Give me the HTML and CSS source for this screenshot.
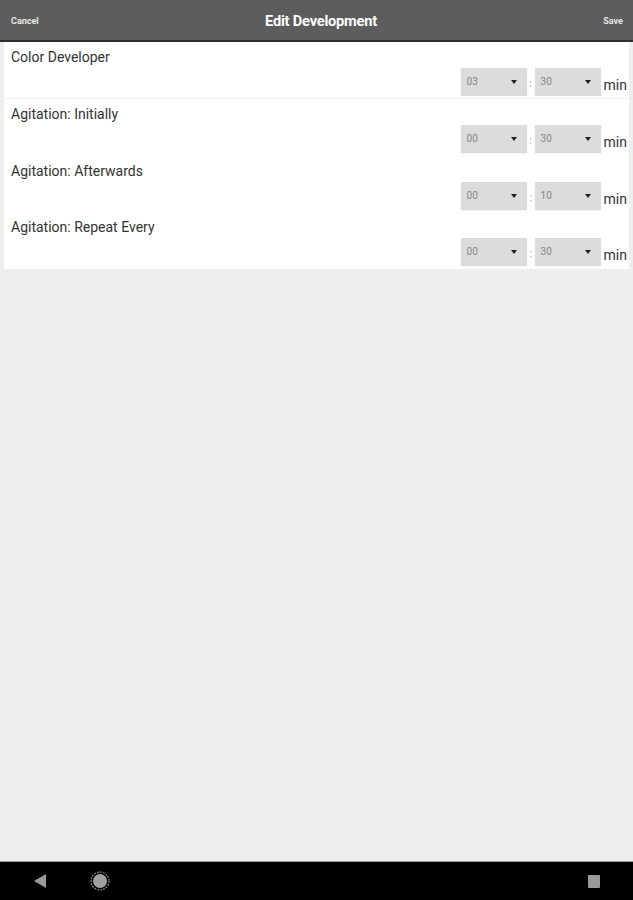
FILE: index.html
```html
<!DOCTYPE html>
<html lang="en">
<head>
  <meta charset="UTF-8">
  <meta name="viewport" content="width=device-width, initial-scale=1.0">
  <title>Edit Development</title>

  <link rel="stylesheet" href="styles.css">
</head>
<body>
  <header class="toolbar">
    <span class="toolbar__action">Cancel</span>
    <h1 class="toolbar__title">Edit Development</h1>
    <span class="toolbar__action">Save</span>
  </header>

  <main class="screen">
    <section class="step-list">
      <div class="step step--first">
        <div class="step__label">Color Developer</div>
        <div class="step__time">
          <span class="picker">03<i class="picker__arrow"></i></span>
          <span class="step__colon">:</span>
          <span class="picker">30<i class="picker__arrow"></i></span>
          <span class="step__unit">min</span>
        </div>
      </div>

      <div class="step">
        <div class="step__label">Agitation: Initially</div>
        <div class="step__time">
          <span class="picker">00<i class="picker__arrow"></i></span>
          <span class="step__colon">:</span>
          <span class="picker">30<i class="picker__arrow"></i></span>
          <span class="step__unit">min</span>
        </div>
      </div>

      <div class="step step--short">
        <div class="step__label">Agitation: Afterwards</div>
        <div class="step__time">
          <span class="picker">00<i class="picker__arrow"></i></span>
          <span class="step__colon">:</span>
          <span class="picker">10<i class="picker__arrow"></i></span>
          <span class="step__unit">min</span>
        </div>
      </div>

      <div class="step">
        <div class="step__label">Agitation: Repeat Every</div>
        <div class="step__time">
          <span class="picker">00<i class="picker__arrow"></i></span>
          <span class="step__colon">:</span>
          <span class="picker">30<i class="picker__arrow"></i></span>
          <span class="step__unit">min</span>
        </div>
      </div>
    </section>
  </main>

  <nav class="navbar">
    <svg class="navbar__icon" width="14" height="16" viewBox="0 0 14 16">
      <polygon points="13,1 13,15 1,8" fill="#9a9a9a"/>
    </svg>
    <svg class="navbar__icon navbar__icon--home" width="20" height="20" viewBox="0 0 20 20">
      <circle cx="10" cy="10" r="9" fill="none" stroke="#8a8a8a" stroke-width="1.2" stroke-dasharray="2 1"/>
      <circle cx="10" cy="10" r="7" fill="#a0a0a0"/>
    </svg>
    <span class="navbar__spacer"></span>
    <svg class="navbar__icon" width="14" height="14" viewBox="0 0 14 14">
      <rect x="1" y="1" width="12" height="13" rx="1" fill="#9a9a9a"/>
    </svg>
  </nav>
</body>
</html>
```

FILE: styles.css
```css
body, html {
  margin: 0;
  height: 100%;
  font-family: Roboto, "Liberation Sans", sans-serif;
  color: #333;
}

body {
  display: flex;
  flex-direction: column;
  background: #eeeeee;
}

.toolbar {
  flex: none;
  display: flex;
  align-items: center;
  justify-content: space-between;
  padding: 2px 10px 0 11px;
  box-sizing: border-box;
  height: 42px;
  background: #5d5d5d;
  border-bottom: 2px solid #2e2e2e;
  color: #fff;
}

.toolbar__action {
  font-size: 9px;
  font-weight: bold;
  color: #e6e6e6;
}

.toolbar__title {
  margin: 0;
  font-size: 14.6px;
  font-weight: bold;
  letter-spacing: -0.2px;
}

.screen {
  flex: 1;
}

.step-list {
  margin: 0 4px;
  background: white;
}

.step {
  height: 57px;
  display: flex;
  flex-direction: column;
  padding: 0 2px 0 7px;
  box-sizing: border-box;
}

.step--short {
  height: 56px;
}

.step--first {
  border-bottom: 1px solid #f0f0f0;
}

.step__label {
  padding-top: 7px;
  font-size: 14px;
  color: #333;
}

.step__time {
  margin-top: 3px;
  display: flex;
  align-items: center;
  justify-content: flex-end;
}

.picker {
  height: 27px;
  display: flex;
  align-items: center;
  justify-content: space-between;
  padding: 0 10px 0 6px;
  width: 50px;
  background: #dcdcdc;
  box-shadow: 0 1px 1px rgba(0, 0, 0, 0.15);
  font-size: 10px;
  color: #858585;
}

.picker__arrow {
  width: 0;
  height: 0;
  border-left: 3.5px solid transparent;
  border-right: 3.5px solid transparent;
  border-top: 4px solid #222;
}

.step__colon {
  width: 8px;
  text-align: center;
  font-size: 10px;
  color: #999;
  padding-top: 4px;
}

.step__unit {
  margin-left: 3px;
  padding-top: 6px;
  font-size: 14px;
  color: #333;
}

.navbar {
  height: 38px;
  flex: none;
  display: flex;
  align-items: center;
  padding: 0 32px 0 33px;
  background: #000;
  border-top: 1px solid #9a9a9a;
}

.navbar__icon--home {
  margin-left: 43px;
}

.navbar__spacer {
  flex: 1;
}
```
